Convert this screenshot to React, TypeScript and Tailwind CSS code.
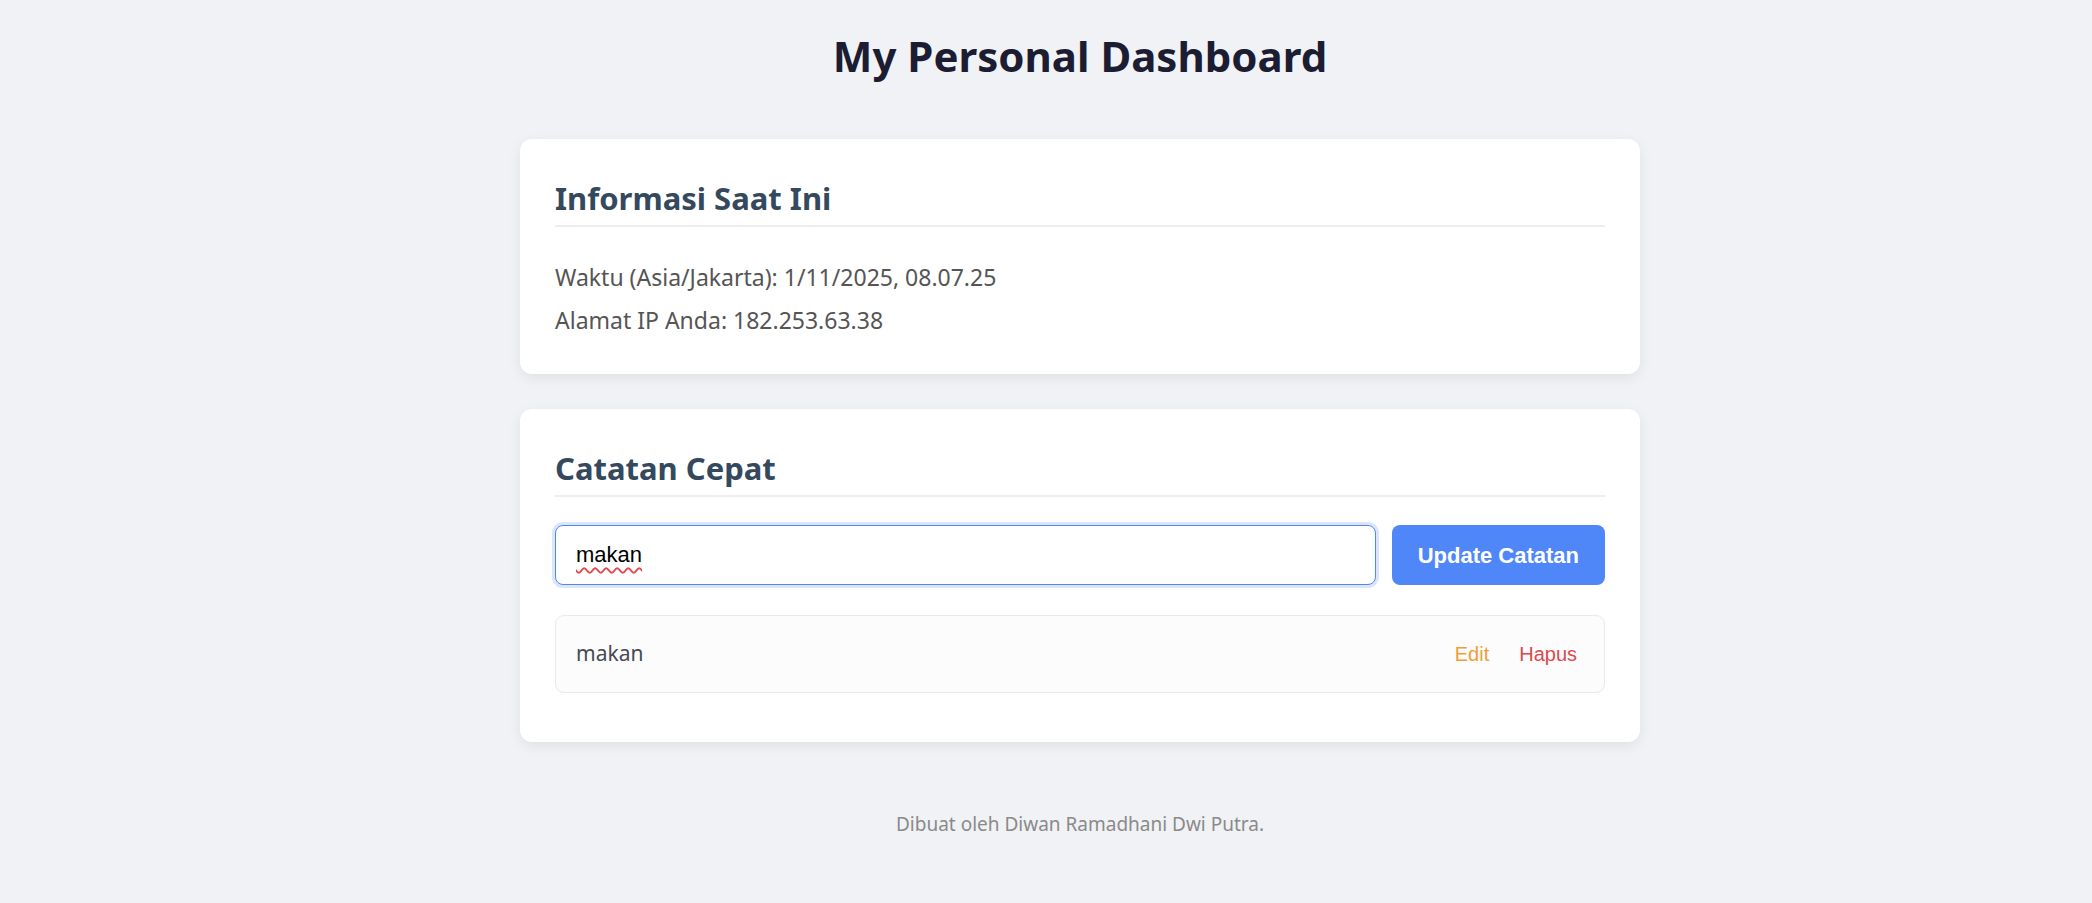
import { useState } from "react";

const sans = "font-['Noto_Sans','Liberation_Sans',sans-serif]";
const arial = "font-['Liberation_Sans',Arial,sans-serif]";

export default function App() {
  const [note, setNote] = useState("makan");
  const notes = ["makan"];

  return (
    <div className={`min-h-screen bg-[#f0f2f5] ${sans}`}>
      <div className="flex flex-col items-center pl-[68px] pt-[32px] pb-[60px]">
        <h1 className="text-[42px] leading-[48px] font-bold text-[#1c1d32]">My Personal Dashboard</h1>

        <section className="mt-[59px] w-[1120px] rounded-[12px] bg-white px-[35px] pt-[35px] pb-[39px] shadow-[0_4px_14px_rgba(0,0,0,0.07)]">
          <h2 className="border-b-2 border-[#eeeeee] pb-[3px] text-[31px] leading-[48px] font-bold text-[#34495e]">
            Informasi Saat Ini
          </h2>
          <div className="mt-[35px] flex flex-col gap-[13px] text-[23px] leading-[30px] text-[#555555]">
            <p>Waktu (Asia/Jakarta): 1/11/2025, 08.07.25</p>
            <p>Alamat IP Anda: 182.253.63.38</p>
          </div>
        </section>

        <section className="mt-[35px] w-[1120px] rounded-[12px] bg-white px-[35px] pt-[35px] pb-[49px] shadow-[0_4px_14px_rgba(0,0,0,0.07)]">
          <h2 className="border-b-2 border-[#eeeeee] pb-[3px] text-[31px] leading-[48px] font-bold text-[#34495e]">
            Catatan Cepat
          </h2>

          <div className="mt-[28px] flex gap-[16px]">
            <div className="relative flex-1">
              <input
                value={note}
                onChange={(e) => setNote(e.target.value)}
                className={`h-[60px] w-full rounded-[8px] border border-[#4f87f7] bg-white px-[20px] text-[22px] text-black outline-none ring-[3px] ring-[#dbe6fd] ${arial}`}
              />
              <span
                className={`pointer-events-none absolute left-[21px] top-[15px] text-[22px] leading-[30px] text-transparent underline decoration-wavy decoration-[#e5484d] decoration-[1.5px] underline-offset-[5px] ${arial}`}
              >
                {note}
              </span>
            </div>
            <button className={`h-[60px] rounded-[8px] bg-[#5087f8] px-[26px] text-[22px] font-bold text-white ${arial}`}>
              Update Catatan
            </button>
          </div>

          <ul className="mt-[30px]">
            {notes.map((n, i) => (
              <li
                key={i}
                className="flex h-[78px] items-center justify-between rounded-[9px] border border-[#eaeaea] bg-[#fcfcfc] pl-[20px] pr-[17px]"
              >
                <span className="text-[21px] text-[#454a54]">{n}</span>
                <div className={`flex gap-[10px] text-[20px] ${arial}`}>
                  <button className="px-[10px] text-[#f39c35]">Edit</button>
                  <button className="px-[10px] text-[#dc4a4f]">Hapus</button>
                </div>
              </li>
            ))}
          </ul>
        </section>

        <footer className="mt-[70px] text-[19px] leading-[24px] text-[#8a8a8a]">
          Dibuat oleh Diwan Ramadhani Dwi Putra.
        </footer>
      </div>
    </div>
  );
}
